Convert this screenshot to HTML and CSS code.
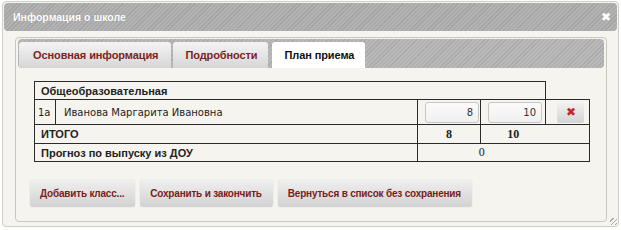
FILE: index.html
```html
<!DOCTYPE html>
<html lang="ru">
<head>
    <meta charset="UTF-8">
    <title>Информация о школе</title>
    <link rel="stylesheet" href="styles.css">
</head>
<body>
    <div class="dialog">
        <div class="titlebar">
            <span class="title">Информация о школе</span>
            <span class="close">&#10006;</span>
        </div>

        <div class="panel">
            <div class="tabs">
                <div class="tab first">Основная информация</div>
                <div class="tab">Подробности</div>
                <div class="tab active">План приема</div>
            </div>

            <table class="plan">
                <colgroup>
                    <col class="c-num">
                    <col class="c-name">
                    <col class="c-v1">
                    <col class="c-v2">
                    <col class="c-del">
                </colgroup>
                <tr class="r-head">
                    <td colspan="4" class="bold">Общеобразовательная</td>
                    <td class="head-blank"></td>
                </tr>
                <tr class="r-class">
                    <td class="num">1а</td>
                    <td class="name">Иванова Маргарита Ивановна</td>
                    <td class="inp"><input type="text" value="8"></td>
                    <td class="inp"><input type="text" value="10"></td>
                    <td class="del-cell"><button class="del">&#10006;</button></td>
                </tr>
                <tr class="r-total">
                    <td colspan="2" class="bold">ИТОГО</td>
                    <td class="sum">8</td>
                    <td class="sum open-right">10</td>
                    <td class="open-left"></td>
                </tr>
                <tr class="r-forecast">
                    <td colspan="2" class="bold">Прогноз по выпуску из ДОУ</td>
                    <td colspan="2" class="zero open-right">0</td>
                    <td class="open-left"></td>
                </tr>
            </table>

            <div class="actions">
                <button class="btn">Добавить класс...</button>
                <button class="btn">Сохранить и закончить</button>
                <button class="btn">Вернуться в список без сохранения</button>
            </div>
        </div>
        <div class="grip"></div>
    </div>
</body>
</html>
```

FILE: styles.css
```css
body {
    margin: 0;
    background: #ffffff;
    font-family: "DejaVu Sans", Verdana, sans-serif;
}
.dialog {
    position: relative;
    margin: 1px 2px;
    height: 226px;
    border: 1px solid #cfcdc8;
    border-radius: 4px;
    background: #f6f4ef;
    box-sizing: border-box;
    padding: 1px 1px 0 1px;
}
.titlebar {
    height: 28px;
    border-radius: 4px;
    background: repeating-linear-gradient(135deg, #a4a4a4 0 1px, #b2b2b2 1px 3px);
    display: flex;
    align-items: center;
    justify-content: space-between;
    padding: 0 6px 0 9px;
}
.title {
    color: #ffffff;
    font-family: "Liberation Sans", Arial, sans-serif;
    font-weight: bold;
    font-size: 10.5px;
    text-shadow: 0 0 1px #888;
}
.close {
    color: #ffffff;
    font-size: 12px;
    font-weight: bold;
}
.panel {
    margin: 6px 10px 0 11px;
    height: 185px;
    border: 1px solid #c9c6bf;
    border-radius: 4px;
    background: #f6f4ef;
    padding: 1px 2px 0 2px;
    box-sizing: border-box;
}
.tabs {
    height: 29px;
    border-radius: 4px;
    background: repeating-linear-gradient(135deg, #aaaaaa 0 1px, #b9b9b9 1px 3px);
    display: flex;
    align-items: flex-end;
    padding-left: 1px;
    gap: 2px;
}
.tab {
    height: 26px;
    line-height: 27px;
    padding: 0 11px 0 12px;
    border-radius: 3px 3px 0 0;
    background: linear-gradient(#f4f4f4, #d6d6d6);
    color: #7c1f22;
    font-family: "Liberation Sans", Arial, sans-serif;
    font-weight: bold;
    font-size: 11px;
    letter-spacing: -0.1px;
}
.tab.first {
    padding: 0 13px 0 14px;
}
.tab.active {
    background: #ffffff;
    color: #111111;
    margin-left: 2px;
}
.plan {
    margin: 13px 0 0 16px;
    border-collapse: collapse;
    table-layout: fixed;
    width: 556px;
    font-size: 10px;
    color: #222;
}
.c-num { width: 21px; }
.c-name { width: 362px; }
.c-v1 { width: 63px; }
.c-v2 { width: 65px; }
.c-del { width: 44px; }
.plan td {
    border: 1px solid #2b2b2b;
    padding: 0 0 0 6px;
    white-space: nowrap;
}
.plan td.bold {
    font-family: "Liberation Sans", Arial, sans-serif;
    font-weight: bold;
    font-size: 11px;
}
.r-head td { height: 17px; }
.r-class td { height: 24px; }
.r-total td { height: 18px; }
.r-forecast td { height: 17px; }
.plan td.head-blank {
    border-top: hidden;
    border-right: hidden;
}
.plan td.num {
    padding-left: 3px;
}
.plan td.name {
    padding-left: 8px;
}
.plan td.inp {
    padding: 0 0 0 7px;
}
.inp input {
    width: 54px;
    height: 21px;
    box-sizing: border-box;
    border: 1px solid #c6c6c6;
    border-radius: 3px;
    background: linear-gradient(#fbfbfb, #f0f0f0);
    text-align: right;
    font-family: "DejaVu Sans", Verdana, sans-serif;
    font-size: 10px;
    color: #333;
    padding: 0 5px;
}
.plan td.del-cell {
    padding: 0 0 0 11px;
}
.del {
    width: 27px;
    height: 21px;
    border: none;
    border-radius: 2px;
    background: linear-gradient(#f2f2f2, #d4d4d4);
    color: #c0262c;
    font-size: 12px;
    padding: 0;
}
.plan td.sum {
    text-align: center;
    padding: 0;
    font-family: "Liberation Serif", "Times New Roman", serif;
    font-weight: bold;
    font-size: 12px;
}
.plan td.zero {
    text-align: center;
    padding: 0;
    font-family: "Liberation Serif", "Times New Roman", serif;
    font-size: 12px;
}
.plan td.open-right {
    border-right: hidden;
}
.actions {
    display: flex;
    gap: 5px;
    margin: 18px 0 0 12px;
}
.btn {
    height: 27px;
    border: none;
    border-radius: 3px;
    background: linear-gradient(#efefef, #d2d2d2);
    box-shadow: 0 0 1px #b8b8b8;
    color: #7a1c20;
    font-family: "Liberation Sans", Arial, sans-serif;
    font-weight: bold;
    font-size: 10px;
    letter-spacing: -0.2px;
    padding: 0 11px 0 10px;
}
.grip {
    position: absolute;
    right: 1px;
    bottom: 1px;
    width: 7px;
    height: 7px;
    background: repeating-linear-gradient(135deg, transparent 0 2px, #aaa 2px 3px);
}
```
